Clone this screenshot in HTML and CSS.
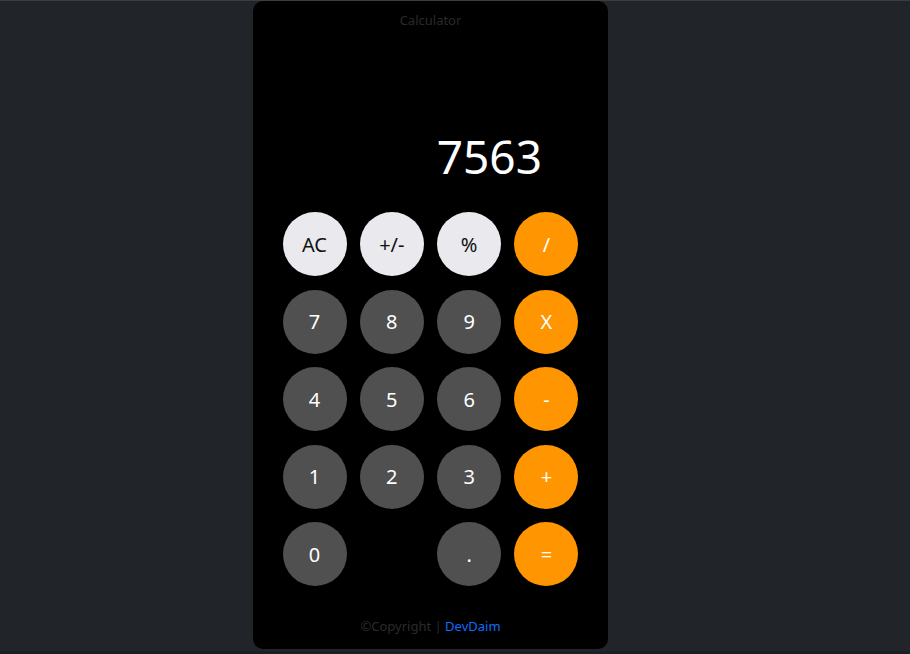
FILE: index.html
```html
<!DOCTYPE html>
<html lang="en">
<head>
<meta charset="utf-8">
<title>Calculator</title>
<link rel="stylesheet" href="styles.css">
</head>
<body>
<div class="page">
  <div class="calculator">
    <h1 class="title">Calculator</h1>
    <div class="display">7563</div>
    <div class="keys">
      <button class="key light">AC</button>
      <button class="key light">+/-</button>
      <button class="key light">%</button>
      <button class="key orange">/</button>
      <button class="key dark">7</button>
      <button class="key dark">8</button>
      <button class="key dark">9</button>
      <button class="key orange">X</button>
      <button class="key dark">4</button>
      <button class="key dark">5</button>
      <button class="key dark">6</button>
      <button class="key orange">-</button>
      <button class="key dark">1</button>
      <button class="key dark">2</button>
      <button class="key dark">3</button>
      <button class="key orange">+</button>
      <button class="key dark">0</button>
      <span class="key empty"></span>
      <button class="key dark">.</button>
      <button class="key orange">=</button>
    </div>
    <p class="footer">©Copyright | <a href="#" class="link">DevDaim</a></p>
  </div>
</div>
<div class="bottom-strip"></div>
</body>
</html>
```
FILE: styles.css
```css
* { box-sizing: border-box; }
html, body { margin: 0; padding: 0; }
body {
  background: #212429;
  font-family: "Noto Sans", "Open Sans", sans-serif;
  height: 654px;
  overflow: hidden;
  border-top: 1px solid #3a3d42;
}
.page {
  display: flex;
  padding-left: 253px;
  height: 650px;
}
.calculator {
  width: 355px;
  height: 648px;
  background: #000;
  border-radius: 10px;
  display: flex;
  flex-direction: column;
  align-items: center;
}
.title {
  margin: 0;
  padding-top: 10px;
  font-size: 13px;
  font-weight: 400;
  color: #2a2a2a;
  line-height: 18px;
}
.display {
  width: 100%;
  text-align: right;
  color: #fff;
  font-size: 46px;
  line-height: 60px;
  padding-right: 66px;
  margin-top: 97px;
}
.keys {
  margin-top: 26px;
  width: 296px;
  display: grid;
  grid-template-columns: repeat(4, 64px);
  justify-content: space-between;
  row-gap: 13.5px;
}
.key {
  width: 64px;
  height: 64px;
  border-radius: 50%;
  border: none;
  padding: 0;
  font-family: inherit;
  font-size: 20px;
  display: flex;
  align-items: center;
  justify-content: center;
}
.light { background: #e9e9ee; color: #111; }
.dark { background: #505050; color: #fff; }
.orange { background: #ff9500; color: #fff; }
.empty { background: transparent; }
.footer {
  margin: 0;
  margin-top: 31px;
  font-size: 13px;
  color: #2c2c2c;
  line-height: 18px;
}
.link { color: #0d6efd; text-decoration: none; }
.bottom-strip {
  height: 3px;
  background: #1b2025;
}
```
